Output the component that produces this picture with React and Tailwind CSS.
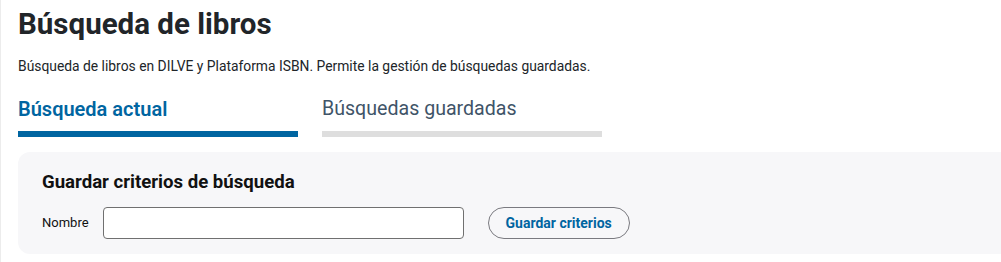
export default function App() {
  return (
    <div className="w-[1001px] h-[262px] overflow-hidden bg-white border-l border-[#ececec] pl-[17px] pt-[4px]" style={{ fontFamily: 'Roboto, "Liberation Sans", sans-serif' }}>
      <h1 className="text-[29.5px] leading-[40px] font-bold text-[#212529]">Búsqueda de libros</h1>
      <p className="mt-[12px] text-[13.85px] leading-[20px] text-[#212529]">
        Búsqueda de libros en DILVE y Plataforma ISBN. Permite la gestión de búsquedas guardadas.
      </p>
      <div className="mt-[19px] flex gap-[24px]">
        <div className="w-[280px]">
          <div className="text-[20px] leading-[28px] font-semibold text-[#0065a1]">Búsqueda actual</div>
          <div className="mt-[8px] h-[6px] bg-[#0065a1]"></div>
        </div>
        <div className="w-[280px]">
          <div className="text-[19.6px] leading-[28px] text-[#3f5468]">Búsquedas guardadas</div>
          <div className="mt-[8px] h-[6px] bg-[#dedede]"></div>
        </div>
      </div>
      <div className="mt-[15px] w-[1000px] rounded-[12px] bg-[#f7f7f9] px-[24px] pt-[18px] pb-[15px]">
        <h2 className="text-[18.6px] leading-[24px] font-bold text-[#111]">Guardar criterios de búsqueda</h2>
        <div className="mt-[13px] flex items-center">
          <label className="text-[13px] text-[#111]">Nombre</label>
          <input className="ml-[14px] w-[361px] h-[32px] rounded-[4px] border border-[#707070] bg-white" />
          <button className="ml-[24px] h-[32px] px-[17px] rounded-full border border-[#7a7a80] text-[14px] font-bold text-[#0065a1]">Guardar criterios</button>
        </div>
      </div>
    </div>
  );
}
